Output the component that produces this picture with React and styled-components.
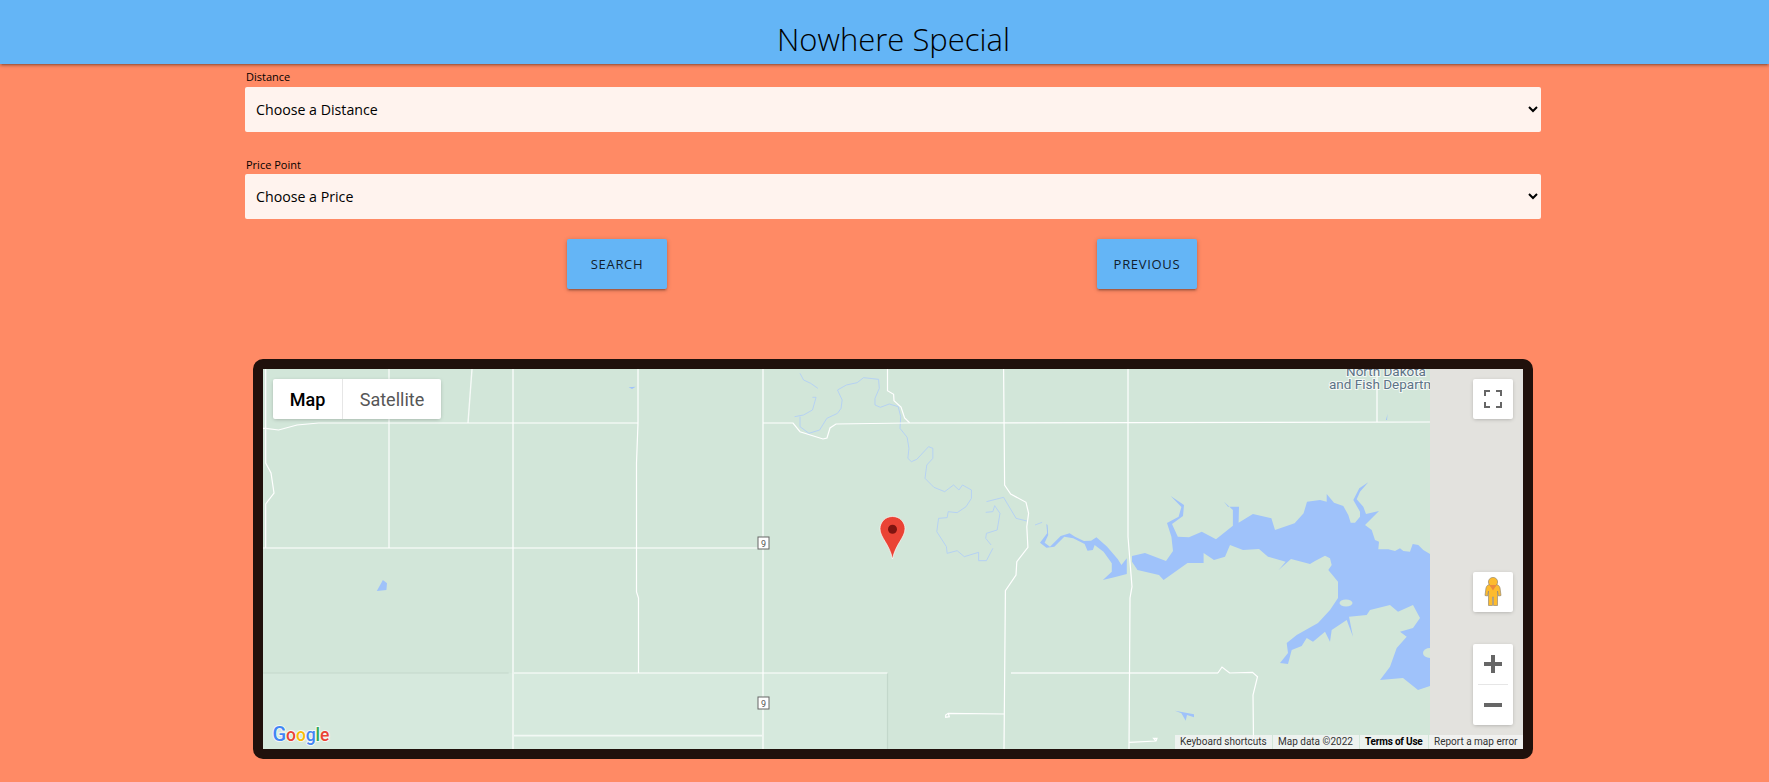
import React from 'react';
import styled, { createGlobalStyle } from 'styled-components';

const GlobalStyle = createGlobalStyle`
  html, body { margin: 0; padding: 0; background: #ff8a65; }
  body { font-family: "Open Sans", "Liberation Sans", sans-serif; color: #000; }
`;

const Header = styled.header`
  height: 64px;
  background: #64b5f6;
  box-shadow: 0 2px 2px 0 rgba(0,0,0,.14), 0 3px 1px -2px rgba(0,0,0,.12), 0 1px 5px 0 rgba(0,0,0,.2);
  display: flex;
  align-items: flex-end;
`;
const Container = styled.div`
  margin-left: 245px;
  width: 1297px;
`;
const Main = styled(Container)`
  padding-top: 1px;
`;
const Title = styled.h1`
  margin: 0 0 3px;
  font-size: 31px;
  line-height: 44px;
  font-weight: 300;
  text-align: center;
  color: #000;
`;
const Field = styled.div`
  display: flex;
  flex-direction: column;
  margin-bottom: ${p => p.$gap}px;
`;
const Label = styled.label`
  font-size: 11px;
  line-height: 15px;
  padding-left: 1px;
  height: ${p => 22 - p.$top}px;
  padding-top: ${p => p.$top}px;
  box-sizing: content-box;
`;
const Select = styled.select`
  height: 45px;
  width: 1296px;
  border: none;
  border-radius: 2px;
  background: #fff3ee;
  color: #000;
  font-family: "Open Sans", "Liberation Sans", sans-serif;
  font-size: 14.2px;
  padding: 0 8px 0 7px;
  outline: none;
`;
const ButtonRow = styled.div`
  display: flex;
  gap: 430px;
  padding-left: 322px;
  margin-top: 20px;
`;
const Button = styled.button`
  width: 100px;
  height: 50px;
  border: none;
  border-radius: 2px;
  background: #64b5f6;
  color: #10202c;
  font-family: "Open Sans", "Liberation Sans", sans-serif;
  font-size: 13px;
  letter-spacing: .7px;
  text-transform: uppercase;
  padding: 0;
  box-shadow: 0 2px 2px 0 rgba(0,0,0,.14), 0 3px 1px -2px rgba(0,0,0,.12), 0 1px 5px 0 rgba(0,0,0,.2);
`;
const MapFrame = styled.section`
  width: 1260px;
  height: 380px;
  margin: 70px 0 0 8px;
  padding: 10px;
  background: #20110c;
  border-radius: 10px;
`;
const MapArea = styled.div`
  position: relative;
  width: 1260px;
  height: 380px;
  overflow: hidden;
  background: #d2e6d9;
`;
const MapSvg = styled.svg`
  display: block;
`;
const Road = styled.path`
  fill: none;
  stroke: ${p => p.$color || '#fff'};
  stroke-width: ${p => p.$w || 1.2}px;
  opacity: ${p => p.$o || 1};
`;
const River = styled.path`
  fill: none;
  stroke: #b2cff6;
  stroke-width: .9px;
  vector-effect: non-scaling-stroke;
`;
const Water = styled.path`
  fill: #9fc2fa;
`;
const PlaceLabel = styled.text`
  font-family: Roboto, sans-serif;
  font-size: 13.5px;
  fill: #5d7386;
  stroke: #fff;
  stroke-width: 2px;
  stroke-opacity: .75;
  paint-order: stroke;
`;
const ShieldNumber = styled.text`
  font-family: Roboto, sans-serif;
  font-size: 9px;
  fill: #555;
  text-anchor: middle;
`;
const GoogleMark = styled.text`
  font-family: Roboto, sans-serif;
  font-size: 17.5px;
  font-weight: 500;
  letter-spacing: -.1px;
  stroke: #fff;
  stroke-width: 2px;
  stroke-opacity: .7;
  paint-order: stroke;
`;
const MapType = styled.div`
  position: absolute;
  left: 10px;
  top: 10px;
  height: 40px;
  display: flex;
  background: #fff;
  border-radius: 2px;
  box-shadow: 0 1px 4px -1px rgba(0,0,0,.3);
`;
const MapTypeOption = styled.div`
  width: ${p => p.$w}px;
  box-sizing: border-box;
  display: flex;
  align-items: center;
  justify-content: center;
  font-family: Roboto, sans-serif;
  font-size: 18px;
  font-weight: ${p => (p.$active ? 500 : 400)};
  color: ${p => (p.$active ? '#000' : '#565656')};
  border-right: ${p => (p.$active ? '1px solid #e6e6e6' : 'none')};
`;
const MapButton = styled.div`
  position: absolute;
  right: 10px;
  top: ${p => p.$top}px;
  width: 40px;
  height: 40px;
  display: flex;
  align-items: center;
  justify-content: center;
  background: #fff;
  border-radius: 2px;
  box-shadow: 0 1px 4px -1px rgba(0,0,0,.3);
`;
const ZoomControl = styled.div`
  position: absolute;
  right: 10px;
  top: 275px;
  width: 40px;
  height: 81px;
  display: flex;
  flex-direction: column;
  align-items: center;
  background: #fff;
  border-radius: 2px;
  box-shadow: 0 1px 4px -1px rgba(0,0,0,.3);
`;
const ZoomStep = styled.div`
  height: 40px;
  display: flex;
  align-items: center;
  justify-content: center;
`;
const ZoomDivider = styled.div`
  width: 30px;
  height: 1px;
  background: #e6e6e6;
`;
const Attribution = styled.div`
  position: absolute;
  right: 0;
  bottom: 0;
  height: 14px;
  display: flex;
  gap: 1px;
`;
const AttributionItem = styled.span`
  width: ${p => p.$w}px;
  padding-left: 5px;
  box-sizing: border-box;
  background: rgba(245,245,245,.75);
  font-family: Roboto, sans-serif;
  font-size: 10px;
  line-height: 14px;
  white-space: nowrap;
  font-weight: ${p => (p.$bold ? 700 : 400)};
  letter-spacing: ${p => (p.$bold ? '-.2px' : '0')};
  color: ${p => (p.$bold ? '#000' : '#333')};
`;

const ROADS = [
  'M263 428.3 L265.7 428.3 L278.6 430 L297 425 L318.6 423 L638 423',
  'M763 423 L793 423 L800 431.7 L823 439 L827 438 L830 428 L836 424 L907 423 L1430 422',
  'M265.7 369 L265.7 463 L271 473 L274 493 L265.7 504 L265.7 548',
  'M513 369 L513 749',
  'M638 369 L638 423 L636.5 463 L636.5 592 L638.5 598 L638.5 673',
  'M763 369 L763 749',
  'M263 548 L758 548',
  'M514 673 L887.5 673',
  'M887.5 369 L887.5 390.7 L893.6 394.3 L894 400.7 L901 407 L904.6 418 L909.6 422.7',
  'M1003.6 369 L1004.6 485 L1010.7 494 L1026 502.3 L1028.6 513.3 L1026.8 526.7 L1027.9 547.3 L1016.8 561.7 L1016 575 L1005.4 590.7 L1004 749',
  'M1128 369 L1128 536.7 L1132 586.7 L1130 598 L1129 749',
  'M1217.9 673 L1222 667 L1229.6 673 L1252.5 672.3 L1257.5 676.7 L1253 695 L1253.6 749',
  'M1004 714 L948.2 713.3 L945.7 715 L945.7 717.3 L949.3 716.7 L948.2 713.3',
  'M1129 742.3 L1156 741 L1157 738.3 L1153.6 738.3 L1156 741',
  'M1377 369 L1377 422',
];
const PALE_ROADS = [
  'M389 369 L389 548',
  'M472 369 L468 423',
  'M1011 673 L1218 673',
];

const LAKE =
  'M1132 556 L1145 553 L1166 561 L1173 551 L1171.4 536.7 L1167 523 L1178.6 516.7 L1181.4 507 L1170.7 496 ' +
  'L1184 505 L1183 516 L1172 524 L1177.8 536.7 L1189 537.3 L1201.8 531.7 L1216 539.3 L1232.9 525.7 L1232.9 510 L1224 501.7 ' +
  'L1228 506.7 L1239 506.7 L1238.6 522.7 L1252.9 514 L1271.4 518.3 L1275 530 L1294.6 523.3 L1303.6 513.3 L1307 501.7 ' +
  'L1320 500 L1326.7 501.7 L1326.7 494 L1334 502.7 L1343.3 506 L1348.3 515 L1350.7 522.7 L1355 522.7 L1360 516.7 L1360 511.7 ' +
  'L1353.3 500 L1359.3 488.3 L1368.3 482.3 L1360 491.7 L1356.7 499.3 L1363.3 506.7 L1366 514 L1379 511 L1365 525 L1371.7 530 ' +
  'L1375 540 L1379 541.7 L1378.3 549.3 L1388.3 549.3 L1395 551 L1400 548.3 L1403.3 551 L1410 551.7 L1412.7 544 L1418.3 545 ' +
  'L1423.3 550 L1430 554 L1430 686 L1418 690 L1403 678 L1380 680 L1390 666.7 L1396.7 648 L1406.7 636.7 L1400 631.7 L1413 628 ' +
  'L1420 618 L1413 605 L1398 611.7 L1390 605 L1370 610 L1366.7 615 L1349 616.7 L1353 636.7 L1346.7 620 L1331.7 630 L1330 641.7 ' +
  'L1325 631.7 L1313 641.7 L1306.7 638 L1301.7 646 L1291.7 650 L1288 664 L1280 663 L1288 653 L1286.7 643 L1296.7 635 L1318 623 ' +
  'L1330 610 L1338 598 L1338 581.7 L1328.3 570 L1331.7 565 L1330 558.3 L1325 555.7 L1315 561 L1310 564 L1291 559 L1278.6 570 ' +
  'L1285.7 561.7 L1268 556.7 L1259 549 L1243 550 L1230 545 L1225 556.7 L1214 560 L1203.6 553 L1203.6 563 L1187.5 563 L1163.6 580 ' +
  'L1159 575 L1137.5 570 L1132 561.7 Z';

const Shield = ({ y }) => (
  <g>
    <rect x="758" y={y} width="11" height="12" fill="#fff" stroke="#666" strokeWidth="1" />
    <ShieldNumber x="763.5" y={y + 9.5}>9</ShieldNumber>
  </g>
);

const MapDrawing = () => (
  <MapSvg width="1260" height="380" viewBox="263 369 1260 380">
    <rect x="263" y="673" width="624.5" height="76" fill="#d6e9dd" />
    <Water d={LAKE} />
    <ellipse cx="1346" cy="603" rx="6.5" ry="3.5" fill="#d2e6d9" />
    <ellipse cx="1430" cy="653" rx="7" ry="5" fill="#d2e6d9" />
    <Water d="M628.6 387.3 L635.7 386.7 L632 389 Z" />
    <Water d="M376.8 591 L382.9 580 L387 583.3 L386.4 590 Z" />
    <Water d="M1175 710.7 L1194 714.3 L1194 717.3 L1187 715 L1185.7 720.7 L1181.4 713.3 Z" />
    <Water d="M1386 420 L1387.5 414 L1387 420 Z" />
    <g transform="translate(800 350) scale(.35714 .33333)">
      <River d="M0 70 L10 90 L30 100 L50 115" />
      <River d="M35 142 L45 142 L35 180 L10 195 L-15 200 M0 200 L0 230 L25 250 L55 240 L75 205 L105 190 L115 175 L118 150 L105 120 L130 105 L160 98 L178 83 L220 88 L222 115 L210 145 L210 165 L225 172 L250 162 L275 170 L282 200 L280 235 L300 262 L305 295 L302 325 L312 335 L327 328 L360 290 L372 295 L372 325 L355 345 L350 385 L375 412 L405 425 L430 405 L445 420 L455 405 L480 420 L480 445 L465 470 L440 488 L415 485 L412 503 L388 505 L383 545 L410 590 L412 610 L440 602 L460 620 L500 607 L500 632 L522 632 L540 595" />
      <River d="M522 455 L570 442 L605 505 L635 513" />
      <River d="M520 487 L540 485 L545 467 L560 490 L552 540 L522 550 L520 565 L535 585" />
      <River d="M658 525 L678 517" />
      <Water d="M690 522 L692 550 L672 578 L690 593 L712 590 L740 560 L765 565 L797 582 L805 602 L820 600 L825 585 L850 605 L873 640 L873 665 L848 690 L880 682 L915 672 L915 625 L900 645 L890 628 L860 590 L830 562 L815 572 L795 573 L770 560 L755 550 L730 558 L700 590 L685 578 L695 555 L693 525 Z" />
    </g>
    <rect x="1430" y="369" width="93" height="380" fill="#e3e2de" />
    <Road d="M263 673 L508.6 673" $color="#c3d8cb" />
    <Road d="M887.5 673 L887.5 749" $color="#c3d8cb" />
    <Road d="M514 735.7 L762 735.7" $w={1.8} $o={.7} />
    {ROADS.map(d => <Road key={d} d={d} />)}
    {PALE_ROADS.map(d => <Road key={d} d={d} $o={.8} $w={1.4} />)}
    <svg x="263" y="369" width="1167" height="380" viewBox="263 369 1167 380">
      <PlaceLabel x="1346" y="376">North Dakota</PlaceLabel>
      <PlaceLabel x="1329" y="389">and Fish Department</PlaceLabel>
    </svg>
    <Shield y={537} />
    <Shield y={697} />
    <path d="M892.5 516.5 C885.5 516.5 880 522 880 528.8 C880 537.5 889.5 544 892.5 559 C895.5 544 905 537.5 905 528.8 C905 522 899.5 516.5 892.5 516.5 Z" fill="#ea4335" stroke="#fff" strokeOpacity=".8" strokeWidth=".8" />
    <circle cx="892.5" cy="529.3" r="4.5" fill="#7f1410" />
    <GoogleMark x="272.5" y="741">
      <tspan fill="#4285f4" fontSize="20">G</tspan>
      <tspan fill="#ea4335">o</tspan>
      <tspan fill="#fbbc05">o</tspan>
      <tspan fill="#4285f4">g</tspan>
      <tspan fill="#34a853">l</tspan>
      <tspan fill="#ea4335">e</tspan>
    </GoogleMark>
  </MapSvg>
);

const FullscreenIcon = () => (
  <svg width="18" height="18" viewBox="0 0 18 18" fill="#666">
    <path d="M0 0h6v2H2v4H0zM12 0h6v6h-2V2h-4zM0 12h2v4h4v2H0zM16 12h2v6h-6v-2h4z" />
  </svg>
);
const Pegman = () => (
  <svg width="18" height="30" viewBox="0 0 18 30">
    <path d="M5.5 7.5 C3.5 8 2.5 9 2 11 L1 18.5 L3.5 19 L4.5 14 L4.5 28.5 L8.5 28.5 L8.5 20 L9.5 20 L9.5 28.5 L13.5 28.5 L13.5 14 L14.5 19 L17 18.5 L16 11 C15.5 9 14.5 8 12.5 7.5 Z" fill="#fdbb2d" stroke="#968a72" strokeWidth=".7" />
    <circle cx="9" cy="5" r="4.6" fill="#fdbb2d" stroke="#968a72" strokeWidth=".7" />
    <path d="M5.5 8 L12.5 8 L9 13.5 Z" fill="#ec8a3c" />
  </svg>
);
const PlusIcon = () => (
  <svg width="18" height="18" viewBox="0 0 18 18" fill="#666">
    <path d="M7 0h4v7h7v4h-7v7H7v-7H0V7h7z" />
  </svg>
);
const MinusIcon = () => (
  <svg width="18" height="18" viewBox="0 0 18 18" fill="#666">
    <path d="M0 7h18v4H0z" />
  </svg>
);

export default function App() {
  return (
    <>
      <GlobalStyle />
      <Header>
        <Container>
          <Title>Nowhere Special</Title>
        </Container>
      </Header>
      <Main as="main">
        <Field $gap={20}>
          <Label $top={4}>Distance</Label>
          <Select defaultValue="">
            <option value="">Choose a Distance</option>
          </Select>
        </Field>
        <Field $gap={0}>
          <Label $top={5}>Price Point</Label>
          <Select defaultValue="">
            <option value="">Choose a Price</option>
          </Select>
        </Field>
        <ButtonRow>
          <Button>Search</Button>
          <Button>Previous</Button>
        </ButtonRow>
        <MapFrame>
          <MapArea>
            <MapDrawing />
            <MapType>
              <MapTypeOption $active $w={70}>Map</MapTypeOption>
              <MapTypeOption $w={98}>Satellite</MapTypeOption>
            </MapType>
            <MapButton $top={10}><FullscreenIcon /></MapButton>
            <MapButton $top={203}><Pegman /></MapButton>
            <ZoomControl>
              <ZoomStep><PlusIcon /></ZoomStep>
              <ZoomDivider />
              <ZoomStep><MinusIcon /></ZoomStep>
            </ZoomControl>
            <Attribution>
              <AttributionItem $w={97}>Keyboard shortcuts</AttributionItem>
              <AttributionItem $w={86}>Map data ©2022</AttributionItem>
              <AttributionItem $w={68} $bold>Terms of Use</AttributionItem>
              <AttributionItem $w={94}>Report a map error</AttributionItem>
            </Attribution>
          </MapArea>
        </MapFrame>
      </Main>
    </>
  );
}
